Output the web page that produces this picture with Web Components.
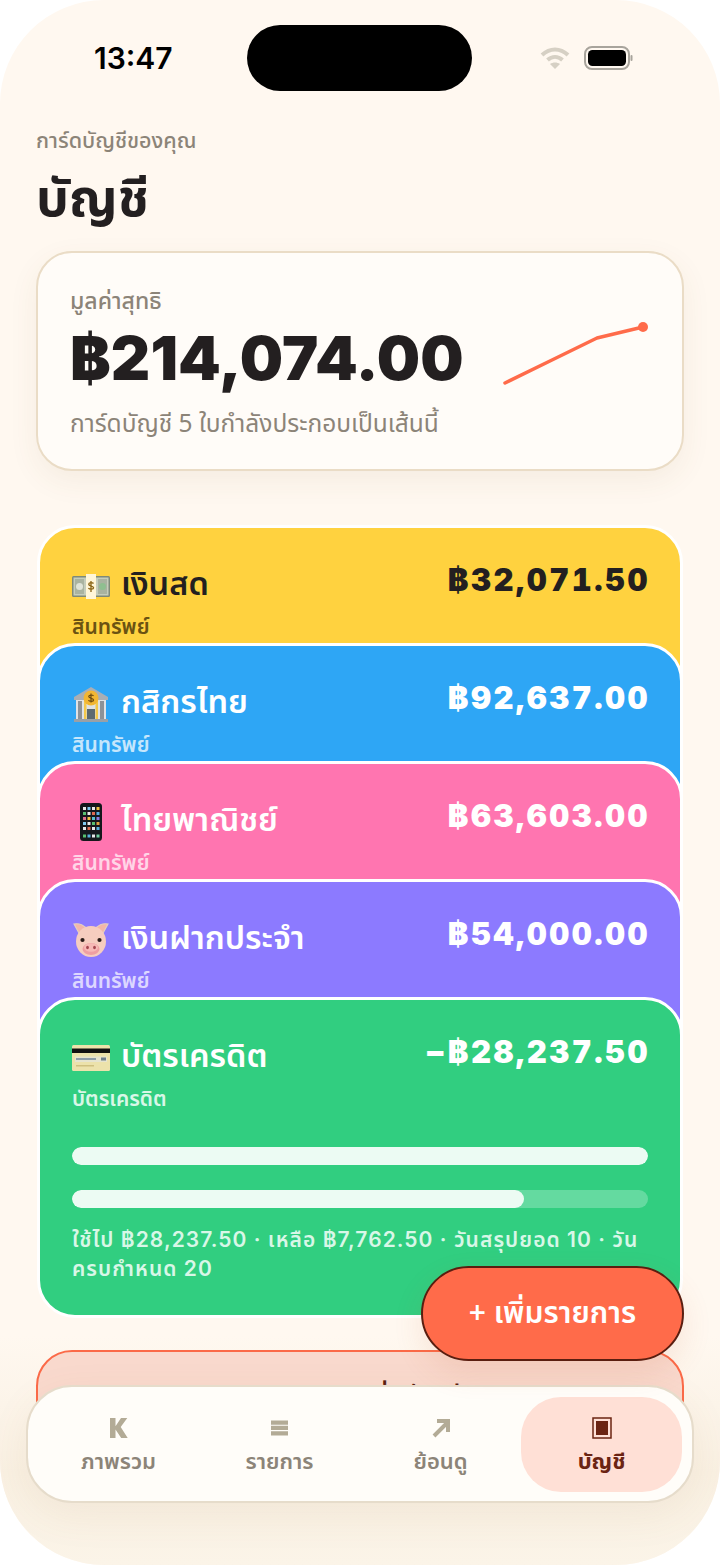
<!DOCTYPE html>
<html lang="th">
<head>
<meta charset="utf-8">
<title>บัญชี</title>
<style>
html, body { margin: 0; padding: 0; background: #fff; }
body { font-family: "Noto Sans", "Liberation Sans", sans-serif; }
</style>
</head>
<body>
<phone-shell>
  <status-bar></status-bar>
  <page-head kicker="การ์ดบัญชีของคุณ" title="บัญชี"></page-head>
  <net-card label="มูลค่าสุทธิ" amount="฿214,074.00" note="การ์ดบัญชี 5 ใบกำลังประกอบเป็นเส้นนี้"></net-card>
  <card-stack>
    <account-card icon="money" name="เงินสด" amount="฿32,071.50" kind="สินทรัพย์" bg="#ffd23f" fg="#231f20" sub="#6b5212"></account-card>
    <account-card icon="bank" name="กสิกรไทย" amount="฿92,637.00" kind="สินทรัพย์" bg="#2ea6f5" fg="#fff" sub="#c6e6fc"></account-card>
    <account-card icon="phone" name="ไทยพาณิชย์" amount="฿63,603.00" kind="สินทรัพย์" bg="#ff75b0" fg="#fff" sub="#ffd5e7"></account-card>
    <account-card icon="pig" name="เงินฝากประจำ" amount="฿54,000.00" kind="สินทรัพย์" bg="#8c7aff" fg="#fff" sub="#ddd7ff"></account-card>
    <account-card last icon="card" name="บัตรเครดิต" amount="−฿28,237.50" kind="บัตรเครดิต" bg="#31ce80" fg="#fff" sub="#d8f7e7">
      <credit-meter used="100"></credit-meter>
      <credit-meter used="78.5"></credit-meter>
      <credit-note>ใช้ไป ฿28,237.50 · เหลือ ฿7,762.50 · วันสรุปยอด 10 · วัน<wbr>ครบกำหนด 20</credit-note>
    </account-card>
  </card-stack>
  <ghost-button>+ เพิ่มบัญชี</ghost-button>
  <add-fab>+ เพิ่มรายการ</add-fab>
  <tab-bar>
    <tab-item glyph="k" label="ภาพรวม"></tab-item>
    <tab-item glyph="list" label="รายการ"></tab-item>
    <tab-item glyph="arrow" label="ย้อนดู"></tab-item>
    <tab-item glyph="box" label="บัญชี" active></tab-item>
  </tab-bar>
</phone-shell>

<script>
const THAI = '"Noto Sans Thai", "Noto Sans", "Liberation Sans", sans-serif'
const NUM = 'Inter, "Noto Sans Thai", "Liberation Sans", sans-serif'

const ICONS = {
  money: `<svg viewBox="0 0 38 26" width="38" height="26">
    <rect x="0" y="3" width="38" height="21" rx="1.5" fill="#7f8a78"/>
    <rect x="1.500" y="4.500" width="35" height="18" fill="#c5cdbc"/>
    <rect x="3" y="6" width="9" height="15" fill="#a9b3a0"/><rect x="26" y="6" width="9" height="15" fill="#a9b3a0"/>
    <circle cx="7.500" cy="13.500" r="3.500" fill="#dfe4d8"/><circle cx="30.500" cy="13.500" r="3.500" fill="#8fbf90"/>
    <rect x="14" y="1" width="10" height="25" fill="#fff6d8"/>
    <path d="M21.500 10.500c-1-1.300-4.800-1.200-4.800.8 0 2.200 4.900 1.300 4.900 3.400 0 1.800-4 1.900-5.200.5M19 8v11" fill="none" stroke="#8a6414" stroke-width="1.300"/>
  </svg>`,
  bank: `<svg viewBox="0 0 36 36" width="36" height="36">
    <path d="M18 1 35 11v3H1v-3z" fill="#a9aeb4"/>
    <rect x="3" y="14" width="30" height="19" fill="#dfe2e5"/>
    <rect x="5" y="15" width="4" height="18" fill="#8c9298"/><rect x="27" y="15" width="4" height="18" fill="#8c9298"/>
    <rect x="11" y="15" width="2.500" height="18" fill="#f4c84a"/><rect x="22.500" y="15" width="2.500" height="18" fill="#f4c84a"/>
    <rect x="14" y="23" width="8" height="10" fill="#5d6a70"/>
    <rect x="1" y="33" width="34" height="3" fill="#9aa0a6"/>
    <circle cx="18" cy="12" r="7.500" fill="#f2b632"/>
    <path d="M20.500 9.800c-1-1.200-4.800-1.100-4.800.8 0 2.200 4.900 1.200 4.900 3.300 0 1.800-3.900 1.900-5.200.5M18 7.500v9" fill="none" stroke="#6b4a12" stroke-width="1.200"/>
  </svg>`,
  phone: `<svg viewBox="0 0 22 38" width="22" height="38">
    <rect width="22" height="38" rx="3.500" fill="#15171c"/>
    <rect x="3" y="4" width="3" height="3" fill="#e8e8e8"/><rect x="7.500" y="4" width="3" height="3" fill="#7fc8f0"/><rect x="12" y="4" width="3" height="3" fill="#e8e8e8"/><rect x="16.500" y="4" width="3" height="3" fill="#f0c040"/>
    <rect x="3" y="9" width="3" height="3" fill="#58c070"/><rect x="7.500" y="9" width="3" height="3" fill="#e8e8e8"/><rect x="12" y="9" width="3" height="3" fill="#e06a50"/><rect x="16.500" y="9" width="3" height="3" fill="#58b0e0"/>
    <rect x="3" y="14" width="3" height="3" fill="#e07090"/><rect x="7.500" y="14" width="3" height="3" fill="#f0c040"/><rect x="12" y="14" width="3" height="3" fill="#58c0d0"/><rect x="16.500" y="14" width="3" height="3" fill="#8a7ae0"/>
    <rect x="3" y="19" width="3" height="3" fill="#7fc8f0"/><rect x="7.500" y="19" width="3" height="3" fill="#e8e8e8"/><rect x="12" y="19" width="3" height="3" fill="#58c070"/><rect x="16.500" y="19" width="3" height="3" fill="#e0a040"/>
    <rect x="3" y="24" width="3" height="3" fill="#e8e8e8"/><rect x="7.500" y="24" width="3" height="3" fill="#e06a50"/><rect x="12" y="24" width="3" height="3" fill="#e8e8e8"/><rect x="16.500" y="24" width="3" height="3" fill="#58b0e0"/>
    <rect x="3" y="31.500" width="3" height="3" fill="#58c070"/><rect x="7.500" y="31.500" width="3" height="3" fill="#58b0e0"/><rect x="12" y="31.500" width="3" height="3" fill="#e8e8e8"/><rect x="16.500" y="31.500" width="3" height="3" fill="#70d0a0"/>
  </svg>`,
  pig: `<svg viewBox="0 0 38 36" width="38" height="36">
    <path d="M8 13 2 2c5-1 11 1 13 6zM30 13l6-11c-5-1-11 1-13 6z" fill="#f3b6a8" stroke="#e3cfc0" stroke-width="1.200"/>
    <ellipse cx="19" cy="19.500" rx="15" ry="15.500" fill="#f6cdbf"/>
    <ellipse cx="19" cy="27" rx="8.500" ry="6" fill="#ef9fa2"/>
    <ellipse cx="19" cy="25.500" rx="7" ry="4.200" fill="#f7b9b6"/>
    <ellipse cx="15.500" cy="25.500" rx="1.400" ry="1.800" fill="#a4474f"/><ellipse cx="22.500" cy="25.500" rx="1.400" ry="1.800" fill="#a4474f"/>
    <circle cx="10.500" cy="18" r="2.100" fill="#2a1c18"/><circle cx="27.500" cy="18" r="2.100" fill="#2a1c18"/>
  </svg>`,
  card: `<svg viewBox="0 0 38 26" width="38" height="26">
    <rect width="38" height="26" rx="1.500" fill="#ece2ab"/>
    <rect y="3.500" width="38" height="4.500" fill="#111"/>
    <rect x="3" y="11.500" width="32" height="5.500" fill="#e6e4cf"/>
    <rect x="4" y="13" width="20" height="2" fill="#8f9ea8"/>
    <rect x="29" y="12.500" width="5" height="3" fill="#6f7f8c"/>
    <rect x="4" y="20" width="18" height="1.500" fill="#cfc080"/>
  </svg>`,
}

class PhoneShell extends HTMLElement {
  connectedCallback() {
    this.attachShadow({mode: 'open'}).innerHTML = `<style>
      :host { display: block; width: 720px; height: 1565px; position: relative; overflow: hidden;
        background: #fff8f0; border-radius: 104px; font-family: ${THAI}; color: #231f20; }
      .wrap { display: flex; flex-direction: column; height: 100%; }
      .glow { position: absolute; left: 0; right: 0; bottom: 0; height: 230px; pointer-events: none;
        background: linear-gradient(rgba(246,236,220,0), #f9f0e2 60%, #fbf4e8); z-index: 1; }
    </style>
    <div class="glow"></div>
    <div class="wrap"><slot></slot></div>`
  }
}

class StatusBar extends HTMLElement {
  connectedCallback() {
    this.attachShadow({mode: 'open'}).innerHTML = `<style>
      :host { display: flex; align-items: center; justify-content: space-between; height: 66px;
        margin-top: 25px; padding: 0 87px 0 94px; flex: none; }
      .time { font: 600 30px Inter, "Liberation Sans", sans-serif; color: #000; width: 125px; }
      .island { width: 225px; height: 66px; border-radius: 33px; background: #000; margin-left: 28px; }
      .right { display: flex; align-items: center; gap: 14px; margin-left: auto; }
      svg { display: block; }
    </style>
    <span class="time">13:47</span>
    <div class="island"></div>
    <div class="right">
      <svg width="30" height="24" viewBox="0 0 30 24" fill="none" stroke="#d6d0c4" stroke-width="4">
        <path d="M2 9c8-7.500 18-7.500 26 0"/><path d="M7.500 14c4.500-4 10.500-4 15 0"/><path d="M15 23l-5-5c3-2 7-2 10 0z" fill="#d6d0c4" stroke="none"/>
      </svg>
      <svg width="49" height="24" viewBox="0 0 49 24">
        <rect x="1" y="1" width="44" height="22" rx="7" fill="none" stroke="#a8a49c" stroke-width="2"/>
        <rect x="4" y="4" width="38" height="16" rx="4.500" fill="#000"/>
        <rect x="46.500" y="9" width="2" height="6" rx="1" fill="#a8a49c"/>
      </svg>
    </div>`
  }
}

class PageHead extends HTMLElement {
  connectedCallback() {
    this.attachShadow({mode: 'open'}).innerHTML = `<style>
      :host { display: block; padding: 37px 36px 0; height: 160px; box-sizing: border-box; flex: none; }
      .k { font-size: 21.500px; line-height: 28px; color: #8c8478; font-weight: 500; }
      .t { font-size: 52px; line-height: 60px; font-weight: 700; margin-top: 14px; color: #231f20; }
    </style>
    <div class="k">${this.getAttribute('kicker')}</div>
    <div class="t">${this.getAttribute('title')}</div>`
  }
}

class NetCard extends HTMLElement {
  connectedCallback() {
    this.attachShadow({mode: 'open'}).innerHTML = `<style>
      :host { display: block; margin: 0 36px; height: 220px; box-sizing: border-box; flex: none; position: relative;
        background: #fffcf8; border: 2px solid #eadcc6; border-radius: 36px; padding: 34px 32px 0;
        box-shadow: 0 10px 30px rgba(120,80,40,.07); }
      .l { font-size: 23px; line-height: 30px; color: #8c8478; font-weight: 500; }
      .row { display: flex; align-items: center; justify-content: space-between; margin-top: 2px; }
      .a { font: 900 61px/78px ${NUM}; color: #231f20; letter-spacing: .1px; }
      .n { font-size: 24.500px; line-height: 32px; color: #8c8478; margin-top: 12px; }
      svg { display: block; margin-right: 2px; margin-top: -8px; }
    </style>
    <div class="l">${this.getAttribute('label')}</div>
    <div class="row">
      <span class="a">${this.getAttribute('amount')}</span>
      <svg width="146" height="66" viewBox="0 0 146 66" fill="none">
        <path d="M3 62 50 39 95 17 141 6" stroke="#ff6b4a" stroke-width="3.500" stroke-linecap="round" stroke-linejoin="round"/>
        <circle cx="141" cy="6" r="5" fill="#ff6b4a"/>
      </svg>
    </div>
    <div class="n">${this.getAttribute('note')}</div>`
  }
}

class CardStack extends HTMLElement {
  connectedCallback() {
    this.attachShadow({mode: 'open'}).innerHTML = `<style>
      :host { display: flex; flex-direction: column; margin: 54px 37px 0; flex: none; }
    </style><slot></slot>`
  }
}

class AccountCard extends HTMLElement {
  connectedCallback() {
    const last = this.hasAttribute('last')
    const a = n => this.getAttribute(n)
    this.attachShadow({mode: 'open'}).innerHTML = `<style>
      :host { display: block; box-sizing: border-box; background: ${a('bg')}; color: ${a('fg')};
        border: 3px solid #fff; border-radius: 38px; padding: 33px 32px 0; position: relative;
        height: ${last ? 321 : 200}px; margin-bottom: ${last ? 0 : -82}px; flex: none; }
      .top { display: flex; justify-content: space-between; align-items: flex-start; height: 46px; }
      .name { display: flex; align-items: center; gap: 11px; font-size: 32.500px; line-height: 46px; font-weight: 600; margin-top: 2px; }
      .ic { width: 38px; display: flex; justify-content: center; margin-top: -1px; }
      svg { display: block; }
      .amt { font: 900 31px/44px ${NUM}; font-variant-numeric: tabular-nums; letter-spacing: 2.500px; margin-top: -3px; margin-right: -2px; }
      .k { font-size: 21px; line-height: 28px; font-weight: 600; color: ${a('sub')}; margin-top: 7px; }
      .extra { margin-top: 33px; }
    </style>
    <div class="top">
      <div class="name"><span class="ic">${ICONS[a('icon')]}</span><span>${a('name')}</span></div>
      <div class="amt">${a('amount')}</div>
    </div>
    <div class="k">${a('kind')}</div>
    <div class="extra"><slot></slot></div>`
  }
}

class CreditMeter extends HTMLElement {
  connectedCallback() {
    this.attachShadow({mode: 'open'}).innerHTML = `<style>
      :host { display: block; height: 18px; border-radius: 9px; background: rgba(255,255,255,.25); margin-bottom: 25px; overflow: hidden; }
      div { height: 100%; border-radius: 9px; background: #ecfbf3; width: ${this.getAttribute('used')}%; }
    </style><div></div>`
  }
}

class CreditNote extends HTMLElement {
  connectedCallback() {
    this.attachShadow({mode: 'open'}).innerHTML = `<style>
      :host { display: block; margin-top: -8px; font: 600 21px/29px ${NUM}; color: #d8f7e7; letter-spacing: 1.050px; }
    </style><slot></slot>`
  }
}

class GhostButton extends HTMLElement {
  connectedCallback() {
    this.attachShadow({mode: 'open'}).innerHTML = `<style>
      :host { display: flex; justify-content: center; align-items: center; height: 94px; box-sizing: border-box; flex: none;
        margin: 32px 36px 0; padding-left: 80px; border: 2px solid #fb6a48; border-radius: 36px; background: #f9d9cd; color: #5a1e10;
        font-size: 26px; font-weight: 600; position: relative; z-index: 1; }
    </style><slot></slot>`
  }
}

class AddFab extends HTMLElement {
  connectedCallback() {
    this.attachShadow({mode: 'open'}).innerHTML = `<style>
      :host { position: absolute; left: 421px; top: 1266px; width: 263px; height: 95px; box-sizing: border-box; z-index: 3;
        display: flex; align-items: center; justify-content: center; background: #ff6b4a; color: #fff;
        border: 2px solid #5a1e10; border-radius: 48px; font-size: 30px; font-weight: 600;
        box-shadow: 0 12px 30px rgba(200,90,50,.12); }
    </style><slot></slot>`
  }
}

class TabBar extends HTMLElement {
  connectedCallback() {
    this.attachShadow({mode: 'open'}).innerHTML = `<style>
      :host { position: absolute; left: 26px; top: 1385px; width: 668px; height: 118px; box-sizing: border-box; z-index: 2;
        display: grid; grid-template-columns: repeat(4, 1fr); gap: 0; padding: 10px 10px;
        background: #fffdf9; border: 2px solid #e6dccb; border-radius: 46px;
        box-shadow: 0 12px 40px rgba(150,110,60,.08); }
    </style><slot></slot>`
  }
}

class TabItem extends HTMLElement {
  connectedCallback() {
    const on = this.hasAttribute('active')
    const c = on ? '#6b2412' : '#b3ab96'
    const g = {
      k: `<svg width="19" height="22" viewBox="0 0 19 22"><path d="M1 1h5.500v8.200L12 1h6.300l-6.600 9L18.700 21h-6.500L6.500 12.500V21H1z" fill="${c}"/></svg>`,
      list: `<svg width="17" height="16" viewBox="0 0 17 16"><path d="M0 .5h17v4.300H0zM0 5.800h17v4.300H0zM0 11.200h17v4.300H0z" fill="${c}"/></svg>`,
      arrow: `<svg width="20" height="20" viewBox="0 0 20 20" fill="none" stroke="${c}" stroke-width="4"><path d="M3 18 16 5M6 3h11v11"/></svg>`,
      box: `<svg width="20" height="22" viewBox="0 0 20 22"><rect x="1" y="1" width="18" height="20" fill="none" stroke="${c}" stroke-width="1.500"/><rect x="4" y="4" width="12" height="14" fill="${c}"/></svg>`,
    }[this.getAttribute('glyph')]
    this.attachShadow({mode: 'open'}).innerHTML = `<style>
      :host { display: flex; flex-direction: column; align-items: center; box-sizing: border-box; height: 95px; padding-top: 19px;
        border-radius: 40px; background: ${on ? '#ffe0d6' : 'transparent'}; }
      .i { height: 24px; display: flex; align-items: center; }
      svg { display: block; }
      .l { font-size: 22px; line-height: 30px; margin-top: 8px; font-weight: ${on ? 700 : 600}; color: ${on ? '#6b2412' : '#8c8478'}; }
    </style><div class="i">${g}</div><div class="l">${this.getAttribute('label')}</div>`
  }
}

customElements.define('phone-shell', PhoneShell)
customElements.define('status-bar', StatusBar)
customElements.define('page-head', PageHead)
customElements.define('net-card', NetCard)
customElements.define('card-stack', CardStack)
customElements.define('account-card', AccountCard)
customElements.define('credit-meter', CreditMeter)
customElements.define('credit-note', CreditNote)
customElements.define('ghost-button', GhostButton)
customElements.define('add-fab', AddFab)
customElements.define('tab-bar', TabBar)
customElements.define('tab-item', TabItem)
</script>
</body>
</html>
